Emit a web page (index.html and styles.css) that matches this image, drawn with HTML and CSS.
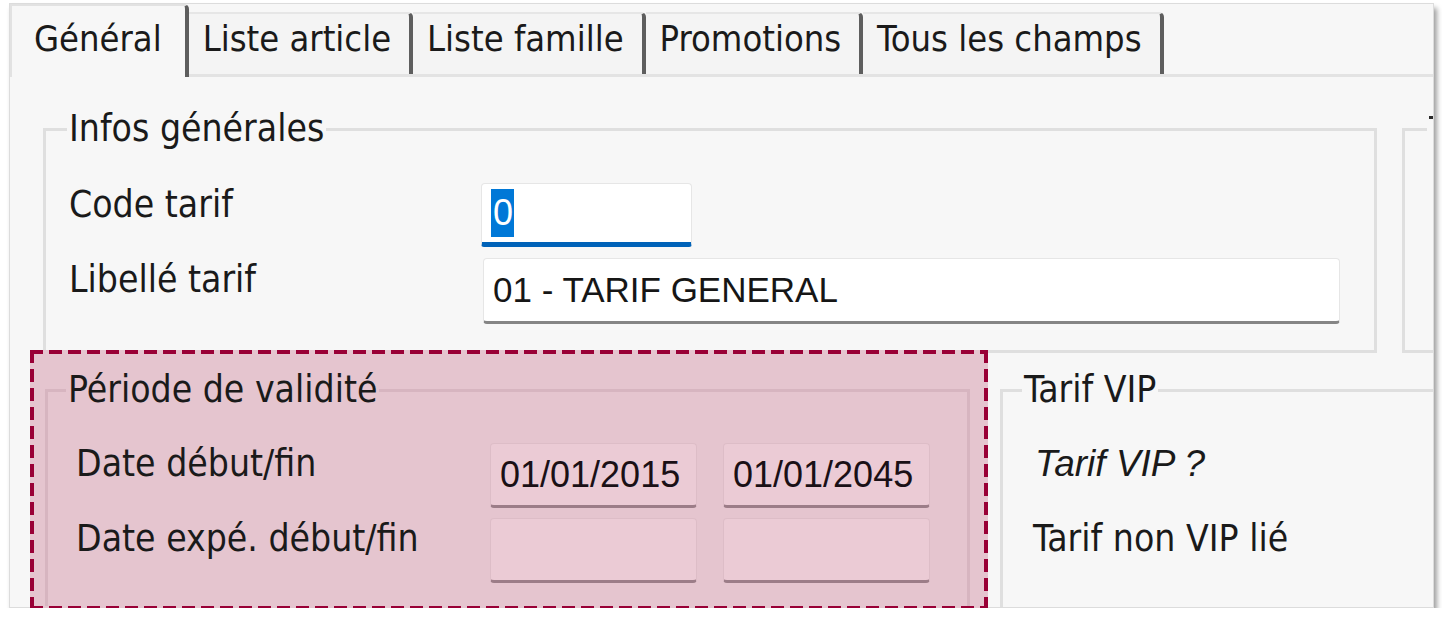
FILE: index.html
```html
<!DOCTYPE html>
<html lang="fr">
<head>
<meta charset="utf-8">
<title>Tarif</title>
<link rel="stylesheet" href="styles.css">
</head>
<body>
<div class="window">
  <div class="tabs">
    <div class="tab active">Général</div>
    <div class="tab">Liste article</div>
    <div class="tab">Liste famille</div>
    <div class="tab">Promotions</div>
    <div class="tab">Tous les champs</div>
  </div>
  <div class="page">
    <div class="top-row">
      <fieldset class="group infos">
        <legend>Infos générales</legend>
        <div class="form-grid">
          <div class="label">Code tarif</div>
          <div class="input code"><span class="sel">0</span></div>
          <div class="label">Libellé tarif</div>
          <div class="input libelle">01 - TARIF GENERAL</div>
        </div>
      </fieldset>
      <fieldset class="group side">
        <legend class="cut-legend"><span class="mark"></span></legend>
      </fieldset>
    </div>
    <div class="bottom-row">
      <div class="highlight">
        <fieldset class="group periode">
          <legend>Période de validité</legend>
          <div class="date-grid">
            <div class="label">Date début/fin</div>
            <div class="date">01/01/2015</div>
            <div class="date">01/01/2045</div>
            <div class="label">Date expé. début/fin</div>
            <div class="date"></div>
            <div class="date"></div>
          </div>
        </fieldset>
      </div>
      <fieldset class="group vip">
        <legend>Tarif VIP</legend>
        <div class="vip-grid">
          <div class="label italic">Tarif VIP ?</div>
          <div class="label linked">Tarif non VIP lié</div>
        </div>
      </fieldset>
    </div>
  </div>
</div>
</body>
</html>
```
FILE: styles.css
```css
* { box-sizing: border-box; }

body {
  margin: 0;
  background: #ffffff;
  font-family: "DejaVu Sans Condensed", "Open Sans", sans-serif;
  font-size: 37px;
  color: #1a1a1a;
}

.window {
  margin: 3px 0 0 9px;
  width: 1425px;
  height: 605px;
  background: #f7f7f7;
  border: 1px solid #dcdcdc;
  box-shadow: 3px 5px 5px rgba(0, 0, 0, 0.38);
  overflow-x: clip;
  overflow-y: visible;
}

/* ---------- tabs ---------- */
.tabs {
  display: flex;
  align-items: flex-end;
  height: 73px;
  border-bottom: 3px solid #e3e3e3;
  font-size: 36px;
}

.tab {
  height: 62px;
  padding: 7px 18px 0 14px;
  line-height: 36px;
  white-space: nowrap;
  background: #f4f4f4;
  border-top: 2px solid #e6e6e6;
  border-right: 4px solid #5e5e5e;
  border-top-right-radius: 5px;
}

.tab.active {
  height: 73px;
  margin-bottom: -3px;
  padding: 15px 23px 0 22px;
  background: #f7f7f7;
  border-left: 2px solid #e2e2e2;
  border-top: 2px solid #e2e2e2;
}

/* ---------- page ---------- */
.page {
  padding: 34px 0 0 20px;
}

.group {
  margin: 0;
  padding: 0;
  min-width: 0;
  border: 3px solid #dfdfdf;
}

.group legend {
  margin-left: 21px;
  padding: 0 2px;
  line-height: 36px;
  white-space: nowrap;
}

.top-row {
  display: flex;
  align-items: stretch;
  margin-left: 13px;
}

.infos {
  width: 1334px;
  flex: none;
}

.side {
  flex: none;
  width: 120px;
  margin-left: 25px;
}

.side .cut-legend {
  height: 36px;
  margin-left: 22px;
}

.mark {
  display: inline-block;
  vertical-align: top;
  width: 14px;
  height: 3px;
  margin-top: 5px;
  background: #2a2a2a;
}

.form-grid {
  display: grid;
  grid-template-columns: 414px 1fr;
  grid-template-rows: 64px 66px;
  row-gap: 11px;
  padding: 36px 34px 26px 23px;
}

.label {
  padding-top: 4px;
  line-height: 36px;
  white-space: nowrap;
}

.input {
  display: flex;
  align-items: center;
  background: #ffffff;
  border: 1px solid #e6e6e6;
  border-radius: 4px;
  font-family: "Liberation Sans", Arial, sans-serif;
  font-size: 35px;
}

.code {
  width: 211px;
  margin-left: -2px;
  padding-left: 9px;
  border-bottom: 5px solid #0062b8;
  border-radius: 4px 4px 3px 3px;
}

.sel {
  background: #0078d7;
  color: #ffffff;
  line-height: 48px;
  padding: 0 1px 0 2px;
  font-size: 36px;
}

.libelle {
  padding-left: 9px;
  border-bottom: 3px solid #858585;
  color: #161616;
}

/* ---------- bottom row ---------- */
.bottom-row {
  display: flex;
  align-items: flex-start;
  margin-top: -3px;
}

.highlight {
  flex: none;
  display: flex;
  flex-direction: column;
  width: 958px;
  height: 260px;
  padding: 4px;
  background:
    repeating-linear-gradient(90deg, #990036 0 13px, transparent 13px 19px) left top / 100% 4px no-repeat,
    repeating-linear-gradient(90deg, #990036 0 13px, transparent 13px 19px) left bottom / 100% 4px no-repeat,
    repeating-linear-gradient(180deg, #990036 0 13px, transparent 13px 19px) left top / 4px 100% no-repeat,
    repeating-linear-gradient(180deg, #990036 0 13px, transparent 13px 19px) right top / 4px 100% no-repeat,
    #e5c5cf;
}

.periode {
  flex: 1;
  margin: 18px 14px 0 11px;
  border-color: #d7b5c0;
  border-bottom-width: 0;
}

.periode legend {
  margin-left: 18px;
}

.date-grid {
  display: grid;
  grid-template-columns: 388px 207px 207px;
  grid-template-rows: 65px 65px;
  column-gap: 26px;
  row-gap: 10px;
  padding: 35px 0 0 28px;
}

.date-grid .label {
  padding-top: 3px;
}

.date {
  display: flex;
  align-items: center;
  padding-left: 9px;
  background: #ebcbd5;
  border: 1px solid #ddbdc7;
  border-bottom: 3px solid #9c7d88;
  border-radius: 4px;
  font-family: "Liberation Sans", Arial, sans-serif;
  font-size: 36px;
  color: #1a1016;
}

.vip {
  flex: none;
  width: 600px;
  height: 235px;
  margin: 22px 0 0 12px;
  border-bottom-width: 0;
}

.vip legend {
  margin-left: 19px;
}

.vip-grid {
  display: grid;
  grid-template-rows: 65px 65px;
  row-gap: 10px;
  padding: 35px 0 0 30px;
}

.vip-grid .label {
  padding-top: 3px;
}

.italic {
  padding-left: 2px;
  font-family: "Liberation Sans", Arial, sans-serif;
  font-style: italic;
}
```
